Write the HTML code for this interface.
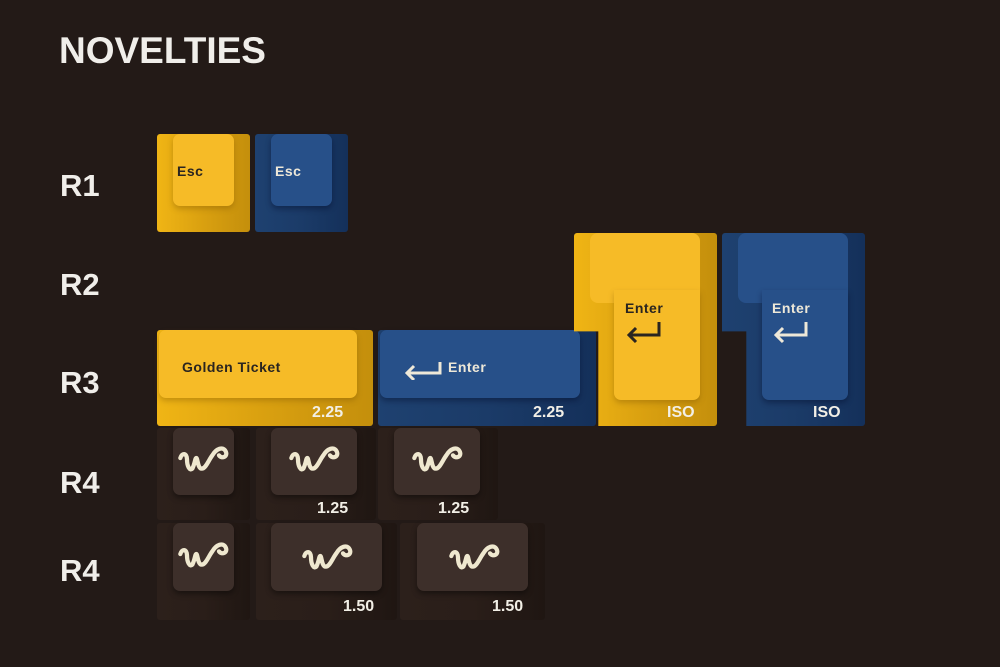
<!DOCTYPE html>
<html><head><meta charset="utf-8"><style>
body{margin:0;width:1000px;height:667px;background:#231a17;position:relative;overflow:hidden;font-family:"Liberation Sans",sans-serif}
.t{position:absolute;color:#f0eeea;font-weight:bold}
.k{position:absolute;border-radius:3px}
.top{position:absolute;border-radius:7px}
.y{background:linear-gradient(90deg,#f0b515,#d9a010 50%,#c48f0c)}
.y .top,.yt{background:#f6bb27;box-shadow:0 3px 6px rgba(120,80,0,.35)}
.b{background:linear-gradient(90deg,#1e4170,#1b3b68 50%,#14305a)}
.b .top,.bt{background:#275089;box-shadow:0 3px 6px rgba(0,10,40,.4)}
.d{background:linear-gradient(90deg,#2c201b,#2a1e19 50%,#1f1612)}
.d .top{background:#3d2f2a;box-shadow:0 3px 6px rgba(0,0,0,.4)}
.lbl{position:absolute;font-weight:bold;font-size:14px;letter-spacing:.5px}
.sz{position:absolute;font-weight:bold;font-size:16px;color:#f2efe6}
svg.w{position:absolute}
</style></head><body>
<div class="t" style="left:59px;top:30px;font-size:37px;letter-spacing:0px">NOVELTIES</div>
<div class="t" style="left:60px;top:168px;font-size:31px">R1</div>
<div class="t" style="left:60px;top:267px;font-size:31px">R2</div>
<div class="t" style="left:60px;top:365px;font-size:31px">R3</div>
<div class="t" style="left:60px;top:465px;font-size:31px">R4</div>
<div class="t" style="left:60px;top:553px;font-size:31px">R4</div>

<!-- R1 -->
<div class="k y" style="left:157px;top:134px;width:93px;height:98px"><div class="top" style="left:16px;top:0;width:61px;height:72px"></div><div class="lbl" style="left:20px;top:29px;color:#2a2520">Esc</div></div>
<div class="k b" style="left:255px;top:134px;width:93px;height:98px"><div class="top" style="left:16px;top:0;width:61px;height:72px"></div><div class="lbl" style="left:20px;top:29px;color:#eee8d8">Esc</div></div>

<!-- R3 -->
<div class="k y" style="left:157px;top:330px;width:216px;height:96px"><div class="top" style="left:2px;top:0;width:198px;height:68px"></div><div class="lbl" style="left:25px;top:29px;color:#2a2520">Golden Ticket</div><div class="sz" style="left:155px;top:74px">2.25</div></div>
<div class="k b" style="left:378px;top:330px;width:218px;height:96px"><div class="top" style="left:2px;top:0;width:200px;height:68px"></div>
<svg style="position:absolute;left:25px;top:30px" width="40" height="20"><path d="M37 2V13H4M11 6L4 13L11 20" fill="none" stroke="#eee8d8" stroke-width="3"/></svg>
<div class="lbl" style="left:70px;top:29px;color:#eee8d8">Enter</div><div class="sz" style="left:155px;top:74px">2.25</div></div>

<!-- ISO yellow -->
<div class="k y" style="left:574px;top:233px;width:143px;height:193px;clip-path:polygon(0 0,100% 0,100% 100%,17% 100%,17% 51%,0 51%)"></div>
<div class="top yt" style="left:590px;top:233px;width:110px;height:70px;border-radius:8px 8px 0 8px;box-shadow:none"></div>
<div class="top yt" style="left:614px;top:290px;width:86px;height:110px;border-radius:0 0 7px 7px"></div>
<div class="lbl" style="left:625px;top:300px;color:#2a2520">Enter</div>
<svg style="position:absolute;left:625px;top:320px" width="40" height="24"><path d="M34 2V15H4M11 8L4 15L11 22" fill="none" stroke="#2a2520" stroke-width="3"/></svg>
<div class="sz" style="left:667px;top:404px">ISO</div>

<!-- ISO blue -->
<div class="k b" style="left:722px;top:233px;width:143px;height:193px;clip-path:polygon(0 0,100% 0,100% 100%,17% 100%,17% 51%,0 51%)"></div>
<div class="top bt" style="left:738px;top:233px;width:110px;height:70px;border-radius:8px 8px 0 8px;box-shadow:none"></div>
<div class="top bt" style="left:762px;top:290px;width:86px;height:110px;border-radius:0 0 7px 7px"></div>
<div class="lbl" style="left:772px;top:300px;color:#eee8d8">Enter</div>
<svg style="position:absolute;left:772px;top:320px" width="40" height="24"><path d="M34 2V15H4M11 8L4 15L11 22" fill="none" stroke="#eee8d8" stroke-width="3"/></svg>
<div class="sz" style="left:813px;top:404px">ISO</div>

<!-- R4 row1 -->
<div class="k d" style="left:157px;top:428px;width:93px;height:92px"><div class="top" style="left:16px;top:0;width:61px;height:67px"></div></div>
<div class="k d" style="left:256px;top:428px;width:120px;height:92px"><div class="top" style="left:15px;top:0;width:86px;height:67px"></div><div class="sz" style="left:61px;top:72px">1.25</div></div>
<div class="k d" style="left:378px;top:428px;width:120px;height:92px"><div class="top" style="left:16px;top:0;width:86px;height:67px"></div><div class="sz" style="left:60px;top:72px">1.25</div></div>
<!-- R4 row2 -->
<div class="k d" style="left:157px;top:523px;width:93px;height:97px"><div class="top" style="left:16px;top:0;width:61px;height:68px"></div></div>
<div class="k d" style="left:256px;top:523px;width:141px;height:97px"><div class="top" style="left:15px;top:0;width:111px;height:68px"></div><div class="sz" style="left:87px;top:75px">1.50</div></div>
<div class="k d" style="left:400px;top:523px;width:145px;height:97px"><div class="top" style="left:17px;top:0;width:111px;height:68px"></div><div class="sz" style="left:92px;top:75px">1.50</div></div>

<svg width="0" height="0" style="position:absolute"><defs><g id="wl"><path d="M3 12C4 8 8 8 8 13C8 18 10 22 12 20C14 16 14 12 15 12C16 12 16 20 19 20C22 20 24 14 27 10C30 5 35 3 37 7C39 11 34 13 32 10" fill="none" stroke="#efe8cf" stroke-width="3.2" stroke-linecap="round"/></g></defs></svg>
<svg class="w" style="left:176px;top:442px" width="54" height="32" viewBox="0 0 40 24"><use href="#wl"/></svg>
<svg class="w" style="left:287px;top:442px" width="54" height="32" viewBox="0 0 40 24"><use href="#wl"/></svg>
<svg class="w" style="left:410px;top:442px" width="54" height="32" viewBox="0 0 40 24"><use href="#wl"/></svg>
<svg class="w" style="left:176px;top:538px" width="54" height="32" viewBox="0 0 40 24"><use href="#wl"/></svg>
<svg class="w" style="left:300px;top:540px" width="54" height="32" viewBox="0 0 40 24"><use href="#wl"/></svg>
<svg class="w" style="left:447px;top:540px" width="54" height="32" viewBox="0 0 40 24"><use href="#wl"/></svg>
</body></html>
